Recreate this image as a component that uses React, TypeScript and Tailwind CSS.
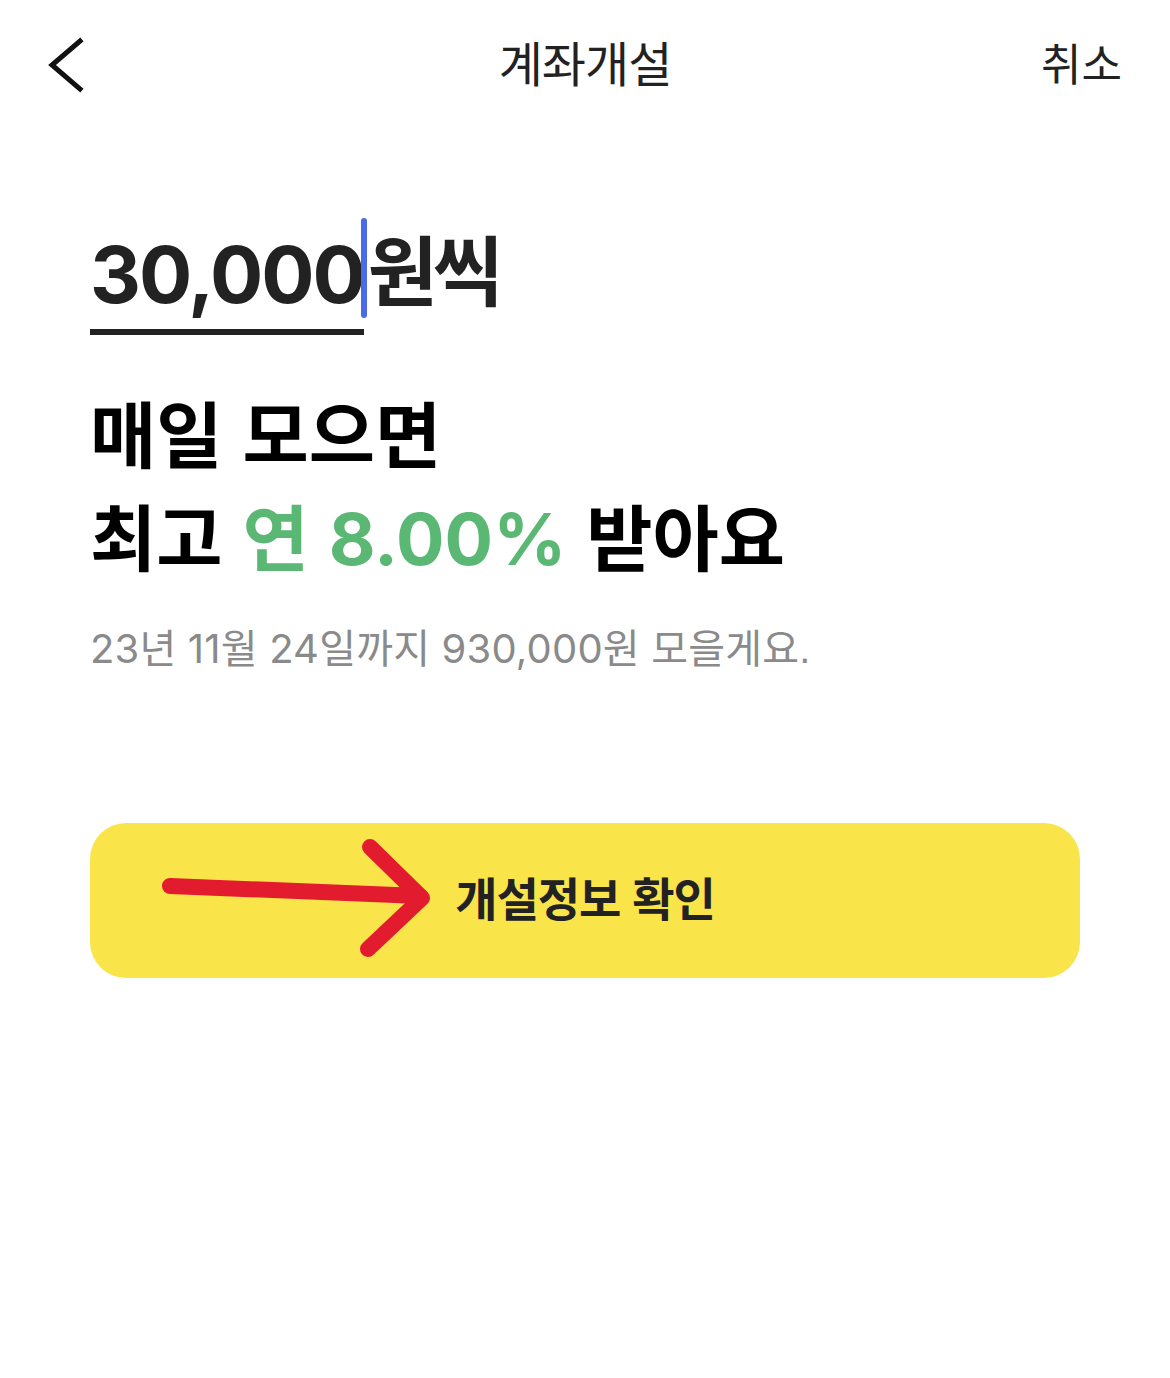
import React from "react";

const font = { fontFamily: '"Liberation Sans", "Noto Sans CJK KR", sans-serif' };
const digits = { fontFamily: 'Inter, "Noto Sans CJK KR", sans-serif' };

export default function App() {
  return (
    <div
      className="w-[1170px] h-[1378px] bg-white text-[#222] overflow-hidden"
      style={font}
    >
      {/* header */}
      <div className="grid grid-cols-[1fr_auto_1fr] items-center h-[134px] px-[48px] pb-[2px]">
        <button className="justify-self-start w-[36px] h-[56px] -mt-[2px]">
          <svg width="36" height="56" viewBox="0 0 36 56" fill="none">
            <path
              d="M32 4 L4 28 L32 52"
              stroke="#111"
              strokeWidth="5"
              strokeLinecap="square"
            />
          </svg>
        </button>
        <h1 className="text-[48px] font-normal tracking-[-1px] text-[#222]">
          계좌개설
        </h1>
        <button className="justify-self-end text-[44px] text-[#222]">
          취소
        </button>
      </div>

      <div className="px-[90px]">
        {/* amount */}
        <div className="flex items-end mt-[78px] h-[112px]">
          <div className="relative">
            <span
              className="block text-[79px] font-bold leading-[100px] text-[#222] tracking-[-2px]"
              style={digits}
            >
              30,000
            </span>
            <div className="absolute left-0 right-0 -bottom-[11px] h-[6px] bg-[#222]" />
            <div className="absolute -right-[3px] -top-[6px] w-[6px] h-[100px] rounded-full bg-[#4a6ae8]" />
          </div>
          <span className="ml-[4px] text-[76px] font-bold leading-[100px] text-[#222] tracking-[-5px]">
            원씩
          </span>
        </div>

        {/* headline */}
        <div className="mt-[62px] text-[72px] font-bold leading-[102px] text-black">
          <div>매일 모으면</div>
          <div>
            최고{" "}
            <span className="text-[#5bb874]">
              연 <span style={digits}>8.00%</span>
            </span>{" "}
            받아요
          </div>
        </div>

        <p className="mt-[28px] text-[40px] text-[#8a8a8a] tracking-[0.2px]">
          <span style={digits}>23</span>년 <span style={digits}>11</span>월{" "}
          <span style={digits}>24</span>일까지{" "}
          <span style={digits}>930,000</span>원 모을게요.
        </p>

        {/* button */}
        <div className="relative mt-[144px]">
          <button className="w-[990px] h-[155px] rounded-[36px] bg-[#f9e44a] flex items-center justify-center text-[46px] font-bold text-[#222] tracking-[-1px]">
            개설정보 확인
          </button>
          <svg
            className="absolute left-[60px] top-[10px] pointer-events-none"
            width="300"
            height="130"
            viewBox="0 0 300 130"
            fill="none"
          >
            <path
              d="M20 53 L270 63"
              stroke="#e31b2e"
              strokeWidth="16"
              strokeLinecap="round"
            />
            <path
              d="M220 14 L272 65 L218 116"
              stroke="#e31b2e"
              strokeWidth="16"
              strokeLinecap="round"
              strokeLinejoin="round"
            />
          </svg>
        </div>
      </div>
    </div>
  );
}
